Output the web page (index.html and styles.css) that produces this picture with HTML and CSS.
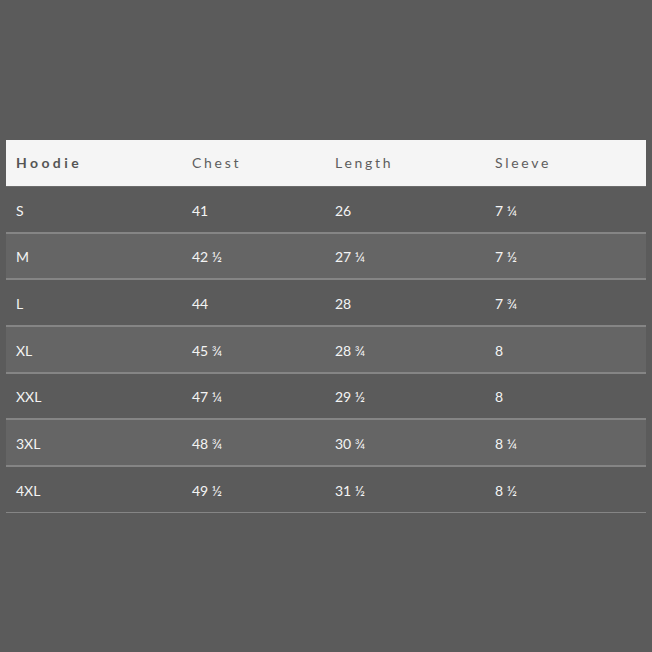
FILE: index.html
```html
<!DOCTYPE html>
<html>
<head>
<meta charset="utf-8">
<link rel="stylesheet" href="styles.css">
</head>
<body>
<div class="page">
  <table class="sizes">
    <colgroup>
      <col class="c1"><col class="c2"><col class="c3"><col class="c4">
    </colgroup>
    <thead>
      <tr><th class="first">Hoodie</th><th>Chest</th><th>Length</th><th>Sleeve</th></tr>
    </thead>
    <tbody>
      <tr><td>S</td><td>41</td><td>26</td><td>7 ¼</td></tr>
      <tr><td>M</td><td>42 ½</td><td>27 ¼</td><td>7 ½</td></tr>
      <tr><td>L</td><td>44</td><td>28</td><td>7 ¾</td></tr>
      <tr><td>XL</td><td>45 ¾</td><td>28 ¾</td><td>8</td></tr>
      <tr><td>XXL</td><td>47 ¼</td><td>29 ½</td><td>8</td></tr>
      <tr><td>3XL</td><td>48 ¾</td><td>30 ¾</td><td>8 ¼</td></tr>
      <tr class="last"><td>4XL</td><td>49 ½</td><td>31 ½</td><td>8 ½</td></tr>
    </tbody>
  </table>
</div>
</body>
</html>
```
FILE: styles.css
```css
html, body {
  margin: 0;
  padding: 0;
  background: #5b5b5b;
  width: 652px;
  height: 652px;
  overflow: hidden;
}
.page {
  padding: 140px 6px 0 6px;
  font-family: "Lato", "DejaVu Sans", sans-serif;
}
.sizes {
  width: 640px;
  border-collapse: collapse;
  table-layout: fixed;
}
.c1 { width: 176px; }
.c2 { width: 143px; }
.c3 { width: 160px; }
.c4 { width: 161px; }
.sizes th {
  background: #f5f5f5;
  color: #5e5e5e;
  font-weight: 400;
  font-size: 14px;
  letter-spacing: 2.7px;
  text-align: left;
  height: 46px;
  padding: 0 10px;
  box-sizing: border-box;
  border-bottom: 1px solid #6c6c6c;
}
.sizes th.first {
  font-weight: 700;
  color: #555;
  letter-spacing: 3.4px;
}
.sizes td {
  color: #f4f4f4;
  font-size: 14px;
  height: 46.67px;
  padding: 2px 10px 0 10px;
  box-sizing: border-box;
  border-bottom: 2px solid #858585;
}
.sizes tbody tr:nth-child(even) td {
  background: #656565;
}
.sizes tr.last td {
  border-bottom: 1px solid #858585;
}
```
